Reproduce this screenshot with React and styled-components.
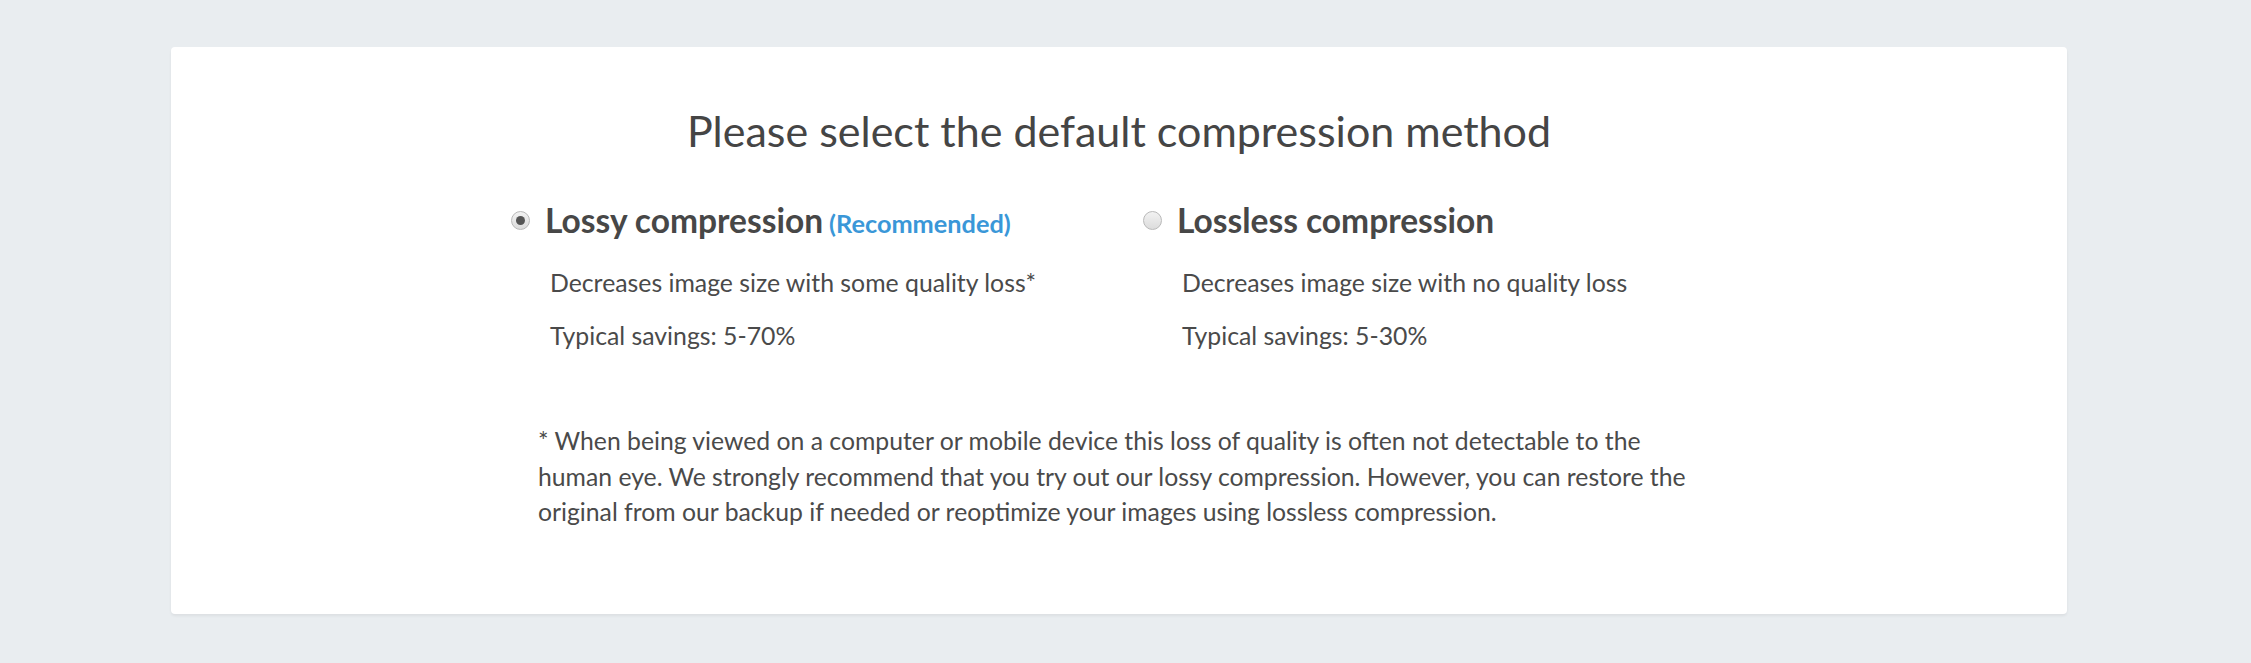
import React from "react";
import styled, { createGlobalStyle } from "styled-components";

const Global = createGlobalStyle`
  html, body { margin: 0; padding: 0; background: #e9edf0; }
  body { font-family: Lato, "Open Sans", sans-serif; color: #474747; }
`;

const Page = styled.div`
  padding: 47px 184px 49px 171px;
  min-height: 663px;
  box-sizing: border-box;
`;

const Card = styled.div`
  background: #fff;
  border-radius: 4px;
  box-shadow: 0 2px 3px rgba(0, 0, 0, 0.06);
  padding: 60px 0 84px;
  display: flex;
  flex-direction: column;
  align-items: center;
`;

const Title = styled.h1`
  margin: 0;
  font-weight: 400;
  font-size: 43px;
  line-height: 48px;
  color: #454545;
`;

const Options = styled.div`
  display: grid;
  grid-template-columns: 632px 584px;
  width: 1216px;
  margin-top: 46px;
`;

const Option = styled.label`
  display: flex;
  flex-direction: column;
`;

const Head = styled.div`
  display: flex;
  align-items: center;
  gap: 15px;
  height: 38px;
`;

const Radio = styled.span`
  width: 19px;
  height: 19px;
  flex: none;
  box-sizing: border-box;
  border-radius: 50%;
  border: 1px solid #b9b9b9;
  background: linear-gradient(#f2f2f2, #dcdcdc);
  display: flex;
  align-items: center;
  justify-content: center;
  &::after {
    content: "";
    width: 9px;
    height: 9px;
    border-radius: 50%;
    background: ${(p) => (p.$checked ? "#555" : "transparent")};
  }
`;

const Name = styled.span`
  font-weight: 700;
  font-size: 33.5px;
  color: #474747;
`;

const Tag = styled.span`
  font-weight: 700;
  font-size: 25.3px;
  color: #3a97d8;
  margin-left: 6px;
`;

const Desc = styled.p`
  margin: 0;
  padding-left: 39px;
  font-size: 24.8px;
  line-height: 53px;
  color: #4a4a4a;
  &:first-of-type { margin-top: 17px; }
`;

const Note = styled.p`
  margin: 61px 0 0;
  width: 1155px;
  padding-right: 7px;
  font-size: 24.75px;
  line-height: 35.5px;
  color: #4a4a4a;
`;

const options = [
  {
    name: "Lossy compression",
    tag: "(Recommended)",
    checked: true,
    desc: "Decreases image size with some quality loss*",
    savings: "Typical savings: 5-70%",
  },
  {
    name: "Lossless compression",
    checked: false,
    desc: "Decreases image size with no quality loss",
    savings: "Typical savings: 5-30%",
  },
];

export default function App() {
  return (
    <Page>
      <Global />
      <Card>
        <Title>Please select the default compression method</Title>
        <Options>
          {options.map((o) => (
            <Option key={o.name}>
              <Head>
                <Radio $checked={o.checked} />
                <span>
                  <Name>{o.name}</Name>
                  {o.tag && <Tag>{o.tag}</Tag>}
                </span>
              </Head>
              <Desc>{o.desc}</Desc>
              <Desc>{o.savings}</Desc>
            </Option>
          ))}
        </Options>
        <Note>
          * When being viewed on a computer or mobile device this loss of quality is often not detectable to the human eye. We strongly recommend that you try out our lossy compression. However, you can restore the original from our backup if needed or reoptimize your images using lossless compression.
        </Note>
      </Card>
    </Page>
  );
}
